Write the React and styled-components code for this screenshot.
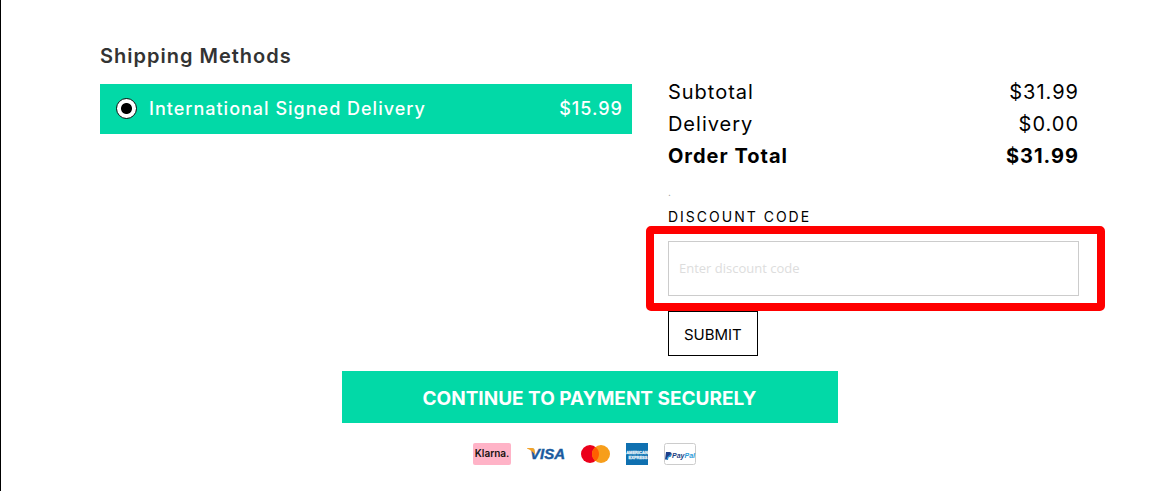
import React from "react";
import styled, { createGlobalStyle } from "styled-components";

const totals = [
  { label: "Subtotal", amount: "$31.99" },
  { label: "Delivery", amount: "$0.00" },
  { label: "Order Total", amount: "$31.99", strong: true },
];

function KlarnaLogo() {
  return (
    <svg width="38" height="22" viewBox="0 0 38 22" role="img" aria-label="Klarna">
      <rect width="38" height="22" rx="2" fill="#ffb3c7" />
      <text x="19" y="14" textAnchor="middle" fontFamily="Inter, sans-serif" fontSize="10" fontWeight="600" fill="#17120f">
        Klarna.
      </text>
    </svg>
  );
}

function VisaLogo() {
  return (
    <svg width="38" height="22" viewBox="0 0 38 22" role="img" aria-label="Visa">
      <text x="3" y="16" fontFamily="Liberation Sans, sans-serif" fontSize="15" fontWeight="700" fontStyle="italic" fill="#1a5a9e" stroke="#1a5a9e" strokeWidth="0.400">
        VISA
      </text>
      <path d="M0 5h5.500q1.600 0 2 1.600L8.400 12Q5.500 7.500 0 5.500z" fill="#f3a32b" />
    </svg>
  );
}

function MastercardLogo() {
  return (
    <svg width="29" height="22" viewBox="0 0 29 22" role="img" aria-label="Mastercard">
      <circle cx="9" cy="11" r="9" fill="#eb001b" />
      <circle cx="20" cy="11" r="9" fill="#f79e1b" />
      <path d="M14.500 3.880a9 9 0 0 1 0 14.240a9 9 0 0 1 0-14.240z" fill="#ff5f00" />
    </svg>
  );
}

function AmexLogo() {
  return (
    <svg width="22" height="22" viewBox="0 0 22 22" role="img" aria-label="American Express">
      <rect width="22" height="22" fill="#0f70b0" />
      <g fontFamily="Liberation Sans, sans-serif" fontSize="4" fontWeight="700" fill="#fff" stroke="#d5e8f5" strokeWidth="0.300" textAnchor="middle">
        <text x="11" y="11">AMERICAN</text>
        <text x="12" y="16">EXPRESS</text>
      </g>
    </svg>
  );
}

function PaypalLogo() {
  return (
    <svg width="32" height="22" viewBox="0 0 32 22" role="img" aria-label="PayPal">
      <rect x="0.500" y="0.500" width="31" height="21" rx="2" fill="#fff" stroke="#ccc" />
      <path d="M2 9h3.500q2.500.3 2 2.600q-.6 2.200-3.200 2.200l-.5 2.700H1z" fill="#1d3f8a" />
      <path d="M7.500 10.500q.8 3.600-3 3.800l-.5 2.700H2.600l.4-2.700" fill="#2790d0" />
      <text x="8" y="15" fontFamily="Liberation Sans, sans-serif" fontSize="7" fontWeight="700" fontStyle="italic" fill="#20417f">
        Pay<tspan fill="#2c9bd8">Pal</tspan>
      </text>
    </svg>
  );
}

function App() {
  return (
    <>
      <GlobalStyle />
      <Page>
        <Columns>
          <section>
            <Heading>Shipping Methods</Heading>
            <Method>
              <Radio type="radio" name="shipping" defaultChecked />
              <MethodName>International Signed Delivery</MethodName>
              <span>$15.99</span>
            </Method>
          </section>
          <Summary>
            <Totals>
              <tbody>
                {totals.map((row) => (
                  <TotalRow key={row.label} $strong={row.strong}>
                    <th scope="row">{row.label}</th>
                    <td>{row.amount}</td>
                  </TotalRow>
                ))}
              </tbody>
            </Totals>
            <Note>.</Note>
            <Label htmlFor="discount">DISCOUNT CODE</Label>
            <Field>
              <Input id="discount" type="text" placeholder="Enter discount code" />
            </Field>
            <SubmitButton type="button">SUBMIT</SubmitButton>
          </Summary>
        </Columns>
        <ContinueButton type="button">CONTINUE TO PAYMENT SECURELY</ContinueButton>
        <Cards>
          <KlarnaLogo />
          <VisaLogo />
          <MastercardLogo />
          <AmexLogo />
          <PaypalLogo />
        </Cards>
      </Page>
    </>
  );
}

export default App;

const GlobalStyle = createGlobalStyle`
  * {
    box-sizing: border-box;
  }
  body {
    margin: 0;
    background: #fff;
    color: #000;
    font-family: Inter, "Liberation Sans", sans-serif;
  }
`;

const Page = styled.main`
  min-height: 100vh;
  padding: 44px 96px 24px 99px;
  border-left: 1px solid #000;
  display: flex;
  flex-direction: column;
  align-items: center;
`;

const Columns = styled.div`
  width: 100%;
  display: grid;
  grid-template-columns: 22fr 17fr;
  column-gap: 36px;
`;

const Heading = styled.h2`
  margin: 0 0 16px;
  color: #333;
  font-size: 20px;
  font-weight: 600;
  line-height: 24px;
  letter-spacing: 1px;
`;

const Method = styled.label`
  display: flex;
  align-items: center;
  height: 50px;
  padding: 0 9px 2px 16px;
  background: #02d9a7;
  color: #fff;
  font-size: 18px;
  font-weight: 500;
  letter-spacing: 1px;
`;

const Radio = styled.input`
  appearance: none;
  width: 21px;
  height: 21px;
  margin: 0 12px 0 0;
  border: 1px solid #111;
  border-radius: 50%;
  background: radial-gradient(circle, #000 5px, #fff 6px);
`;

const MethodName = styled.span`
  flex: 1;
`;

const Summary = styled.section`
  padding-top: 32px;
`;

const Totals = styled.table`
  width: 100%;
  border-collapse: collapse;
  font-size: 20px;
  line-height: 32px;
  letter-spacing: 1px;
`;

const TotalRow = styled.tr`
  th,
  td {
    padding: 0;
    font-weight: ${(props) => (props.$strong ? 700 : 400)};
    text-align: left;
  }
  td {
    text-align: right;
  }
`;

const Note = styled.p`
  margin: 0;
  padding-top: 8px;
  color: #999;
  font-size: 10px;
  line-height: 24px;
`;

const Label = styled.label`
  display: block;
  margin-bottom: 12px;
  font-size: 14px;
  line-height: 25px;
  letter-spacing: 2px;
`;

const Field = styled.div`
  position: relative;
  &::after {
    content: "";
    position: absolute;
    inset: -15px -26px -15px -22px;
    border: 8px solid #f00;
    border-radius: 5px;
    pointer-events: none;
  }
`;

const Input = styled.input`
  display: block;
  width: 100%;
  height: 55px;
  padding: 0 10px 2px;
  border: 1px solid #ccc;
  border-radius: 0;
  font-family: "Open Sans", sans-serif;
  font-size: 13px;
  &::placeholder {
    color: #ddd;
    opacity: 1;
  }
`;

const SubmitButton = styled.button`
  display: block;
  height: 45px;
  margin: 15px 0;
  padding: 2px 15px 0;
  border: 1px solid #000;
  background: #fff;
  color: #000;
  font-family: inherit;
  font-size: 15px;
`;

const ContinueButton = styled.button`
  width: 496px;
  max-width: 100%;
  height: 52px;
  padding: 2px 16px 0;
  border: 0;
  background: #02d9a7;
  color: #fff;
  font-family: inherit;
  font-size: 19px;
  font-weight: 700;
`;

const Cards = styled.div`
  display: flex;
  align-items: center;
  gap: 16px;
  padding: 20px 10px 0 0;
`;
